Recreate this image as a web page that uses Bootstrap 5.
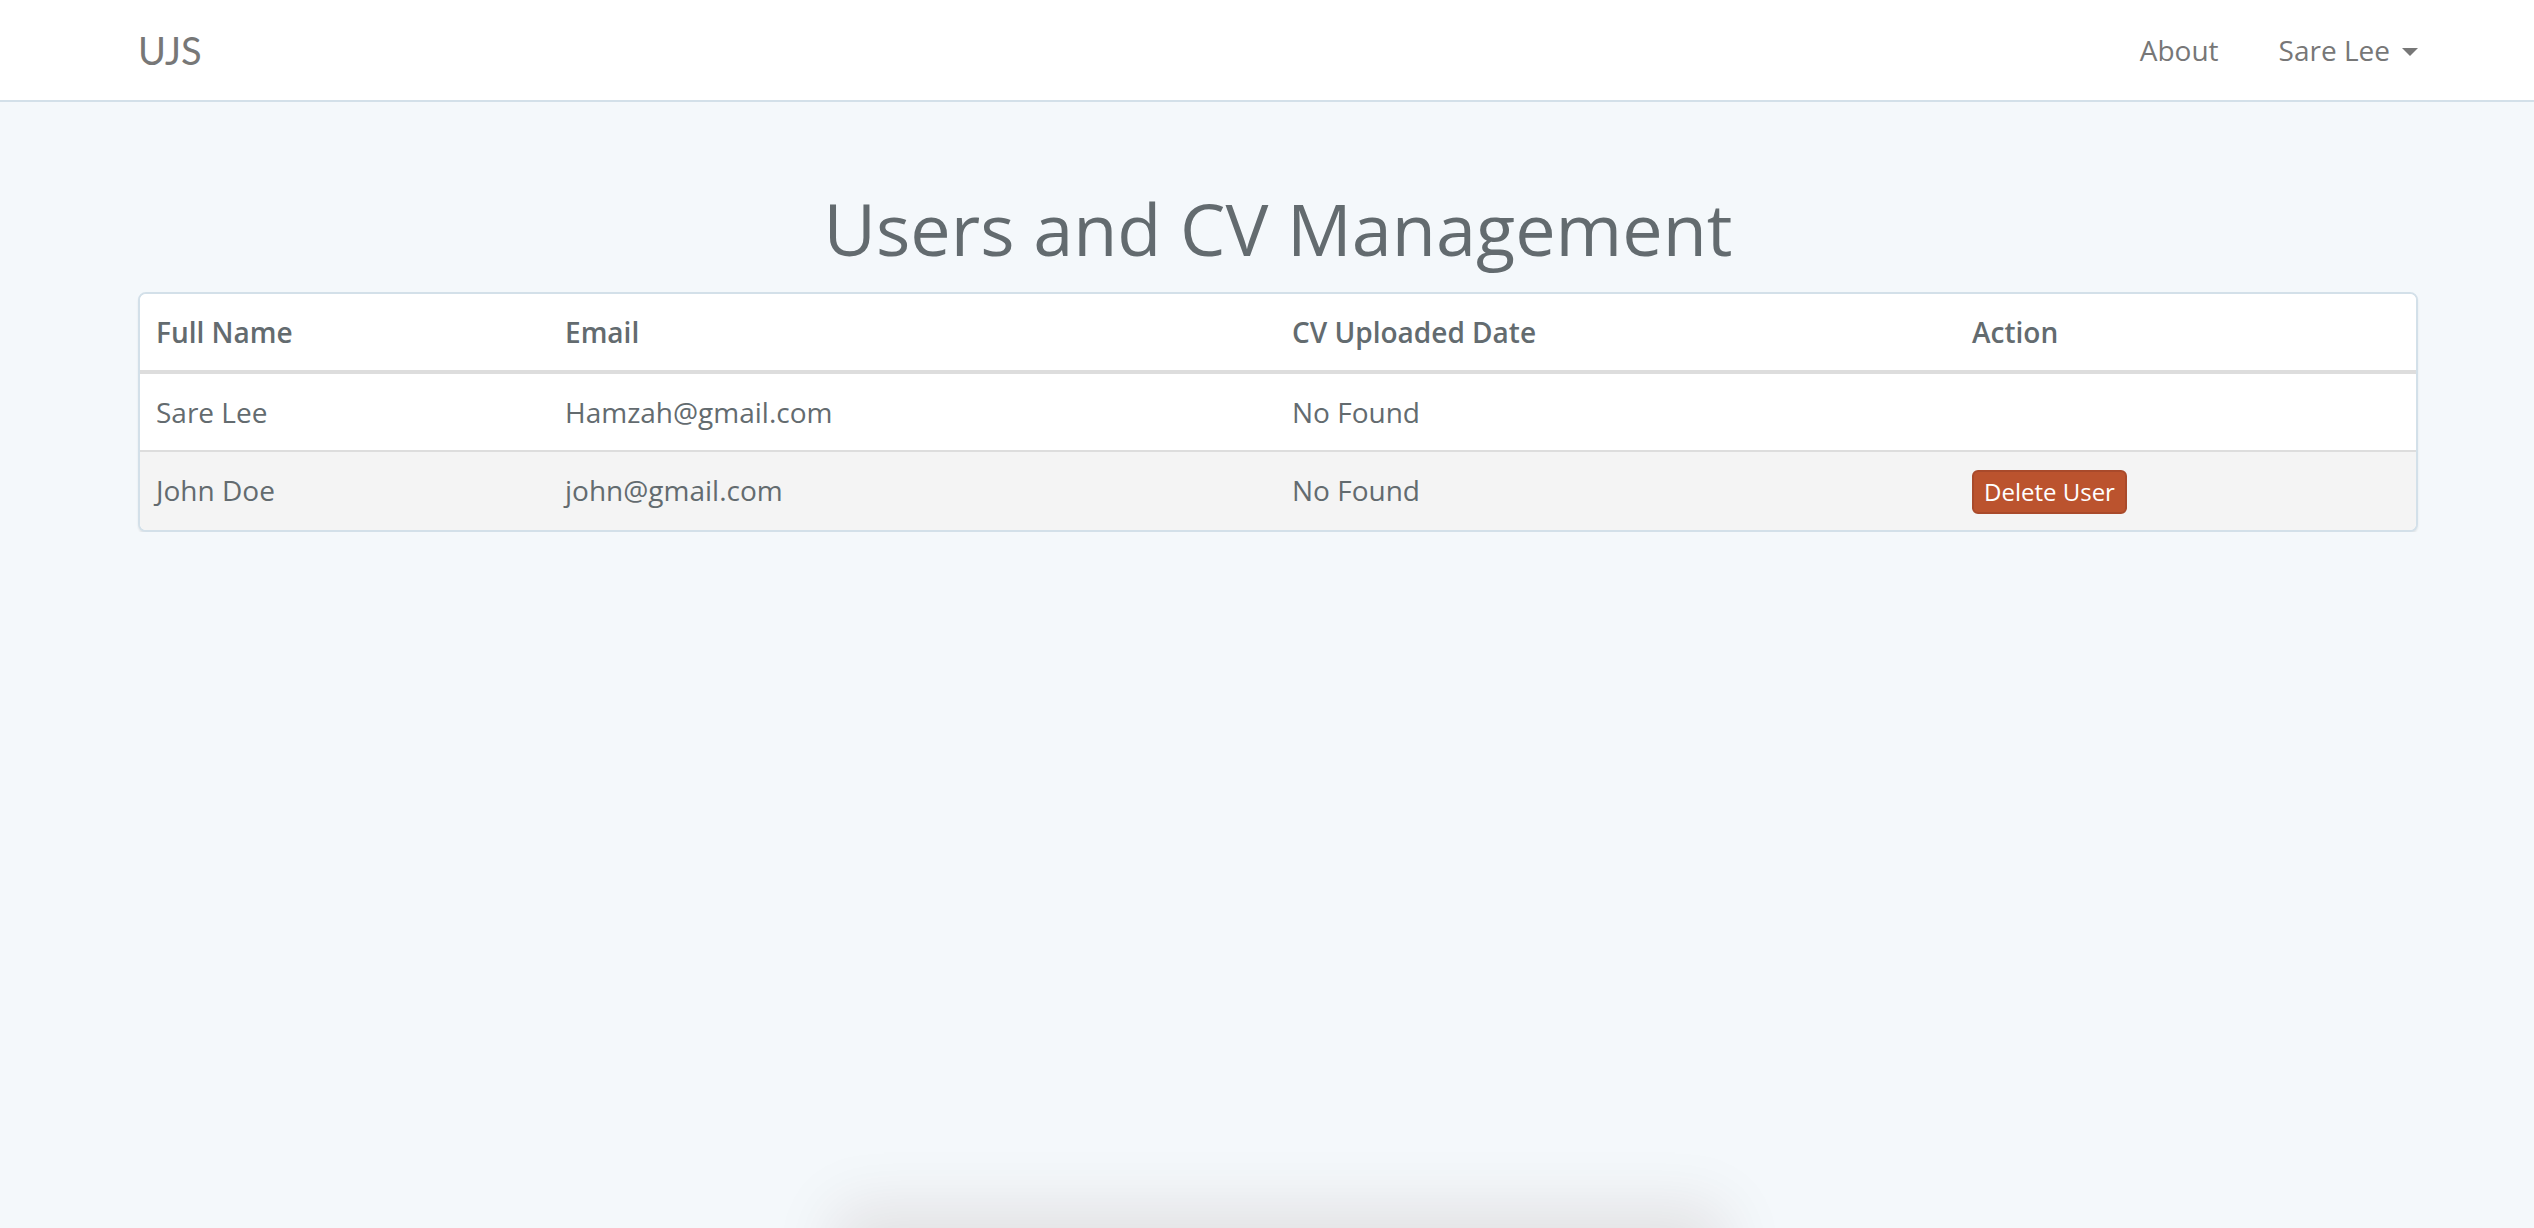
<!DOCTYPE html>
<html lang="en">
<head>
<meta charset="utf-8">
<meta name="viewport" content="width=device-width, initial-scale=1">
<title>UJS</title>
<link rel="stylesheet" href="https://cdn.jsdelivr.net/npm/bootstrap@5.3.0/dist/css/bootstrap.min.css">
<style>
  body {
    background: #f4f8fb;
    color: #636b6f;
    font-family: "Open Sans", "Noto Sans", sans-serif;
    font-size: 28px;
    line-height: 44px;
  }
  .page-gutter { padding-left: 138px; padding-right: 116px; }
  .top-bar { border-bottom: 2px solid #d3e0e9; min-height: 102px; }
  .top-bar a, .top-bar button { color: #777; }
  .top-bar .navbar-brand { font-family: Lato, "Open Sans", sans-serif; font-size: 38px; line-height: 44px; }
  .top-bar .navbar-nav { gap: 60px; }
  .user-menu { line-height: 44px; }
  .user-menu::after {
    content: "";
    border-top: 8px solid;
    border-left: 8px solid transparent;
    border-right: 8px solid transparent;
    margin: 4px 0 0 12px;
  }
  .page-title { font-size: 72px; line-height: 80px; margin: 86px 0 24px; }
  .users-panel {
    border: 2px solid #d3e0e9;
    border-radius: 8px;
    box-shadow: 0 2px 2px rgba(0, 0, 0, .08);
  }
  .users-table {
    --bs-table-color: #636b6f;
    --bs-table-bg: #fff;
    table-layout: fixed;
  }
  .users-table > :not(caption) > * > * {
    padding: 16px;
    border: 0;
    color: #636b6f;
  }
  .users-table > thead > tr > th { font-weight: 600; border-bottom: 4px solid #ddd; }
  .users-table > tbody > tr + tr > * { border-top: 2px solid #ddd; background: #f4f4f4; }
  .col-name { width: 409px; }
  .col-email { width: 727px; }
  .col-date { width: 680px; }
  .btn-delete {
    --bs-btn-color: #fff;
    --bs-btn-bg: #bb532e;
    --bs-btn-border-color: #a94a2b;
    --bs-btn-hover-color: #fff;
    --bs-btn-hover-bg: #a94a2b;
    --bs-btn-hover-border-color: #8f3e24;
    --bs-btn-padding-x: 10px;
    --bs-btn-padding-y: 2px;
    --bs-btn-font-size: 24px;
    --bs-btn-border-width: 2px;
    --bs-btn-border-radius: 6px;
    --bs-btn-line-height: 36px;
    display: block;
    margin-top: 2px;
  }
  .dock-shadow {
    position: fixed;
    top: 100%;
    left: 33%;
    right: 32%;
    height: 200px;
    box-shadow: 0 -20px 60px rgba(70, 20, 0, .1);
  }
</style>
</head>
<body>
<nav class="navbar navbar-expand bg-white top-bar page-gutter py-0">
  <a class="navbar-brand p-0 m-0" href="#">UJS</a>
  <ul class="navbar-nav ms-auto align-items-center">
    <li class="nav-item"><a class="nav-link p-0" href="#">About</a></li>
    <li class="nav-item dropdown">
      <button type="button" class="user-menu d-flex align-items-center border-0 bg-transparent p-0" data-bs-toggle="dropdown" aria-expanded="false">Sare Lee</button>
      <ul class="dropdown-menu dropdown-menu-end">
        <li><a class="dropdown-item" href="#">Logout</a></li>
      </ul>
    </li>
  </ul>
</nav>

<main class="page-gutter">
  <h1 class="page-title text-center fw-normal">Users and CV Management</h1>
  <div class="users-panel bg-white overflow-hidden">
    <table class="table users-table mb-0 align-top">
      <colgroup>
        <col class="col-name"><col class="col-email"><col class="col-date"><col>
      </colgroup>
      <thead>
        <tr>
          <th scope="col">Full Name</th>
          <th scope="col">Email</th>
          <th scope="col">CV Uploaded Date</th>
          <th scope="col">Action</th>
        </tr>
      </thead>
      <tbody>
        <tr>
          <td>Sare Lee</td>
          <td>Hamzah@gmail.com</td>
          <td>No Found</td>
          <td></td>
        </tr>
        <tr>
          <td>John Doe</td>
          <td>john@gmail.com</td>
          <td>No Found</td>
          <td><button type="button" class="btn btn-delete">Delete User</button></td>
        </tr>
      </tbody>
    </table>
  </div>
</main>

<div class="dock-shadow" aria-hidden="true"></div>
<script src="https://cdn.jsdelivr.net/npm/bootstrap@5.3.0/dist/js/bootstrap.bundle.min.js"></script>
</body>
</html>
